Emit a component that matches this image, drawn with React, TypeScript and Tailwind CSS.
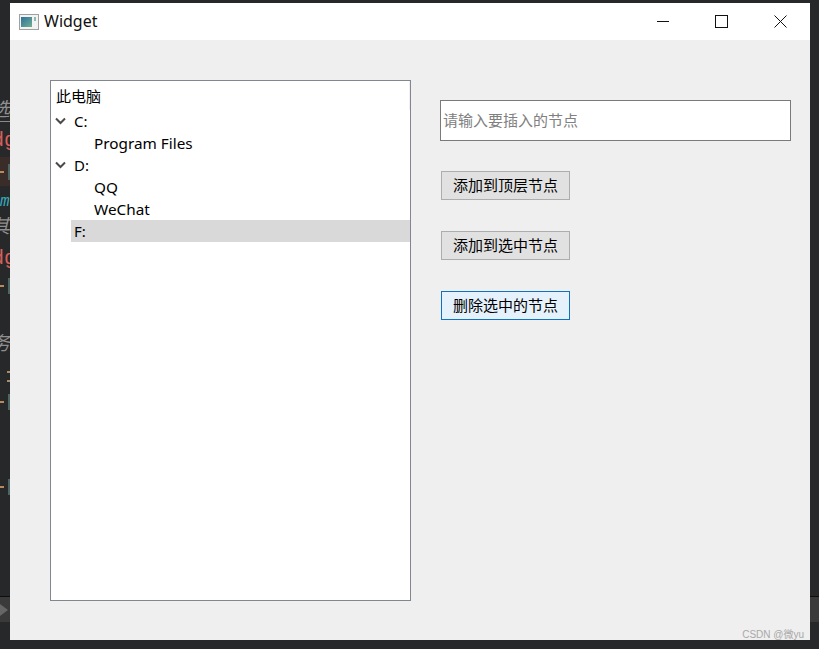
const ui = '"Noto Sans", "Noto Sans CJK SC", sans-serif';
const mono = '"Liberation Mono", monospace';

function Chevron() {
  return (
    <svg width="12" height="8" viewBox="0 0 12 8" className="shrink-0">
      <path d="M1 1.5 L5.5 6 L10 1.5" fill="none" stroke="#4a4a4a" strokeWidth="2" />
    </svg>
  );
}

function Branch({ label }: { label: string }) {
  return (
    <div className="flex h-[22px] items-center pl-[4px]">
      <div className="w-[19px]"><Chevron /></div>
      <span>{label}</span>
    </div>
  );
}

function Leaf({ label }: { label: string }) {
  return <div className="flex h-[22px] items-center pl-[43px] text-[15.3px]">{label}</div>;
}

function Btn({ children, active }: { children: string; active?: boolean }) {
  return (
    <button
      className={
        active
          ? 'ml-px flex h-[29px] w-[129px] items-center justify-center border border-[#0f72c0] bg-[#e5f1fb] pb-px text-[15px] text-black'
          : 'ml-px flex h-[29px] w-[129px] items-center justify-center border border-[#adadad] bg-[#e1e1e1] pb-px text-[15px] text-black'
      }
    >
      {children}
    </button>
  );
}

function Glyph({ h, children, cls }: { h: string; children: string; cls: string }) {
  return <div className={`flex ${h} shrink-0 items-center justify-end overflow-hidden whitespace-nowrap ${cls}`}>{children}</div>;
}

function Marks() {
  return (
    <div className="flex h-[16px] shrink-0 items-center justify-between">
      <div className="h-[2px] w-[4px] bg-[#b98a5c]" />
      <div className="h-full w-[2px] bg-[#4d6663]" />
    </div>
  );
}

function LeftStrip() {
  return (
    <div className="flex w-[10px] shrink-0 flex-col overflow-hidden">
      <div className="h-[98px] shrink-0" />
      <Glyph h="h-[24px]" cls="border-b border-[#8a8a8a] text-[19px] italic text-[#8f8f8f]">选</Glyph>
      <div className="h-[6px] shrink-0" />
      <div className="flex h-[26px] shrink-0 items-center justify-start overflow-hidden whitespace-nowrap text-[20px] text-[#d95f5b]" style={{ fontFamily: mono }}><span className="ml-[-8px]">dg</span></div>
      <div className="h-[3px] shrink-0" />
      <div className="flex h-[29px] shrink-0 items-center bg-[#3a2c28]"><div className="w-full"><Marks /></div></div>
      <div className="h-[6px] shrink-0" />
      <div className="flex h-[20px] shrink-0 items-center overflow-hidden text-[16px] italic text-[#36a9bb]" style={{ fontFamily: mono }}>m</div>
      <div className="h-[2px] shrink-0" />
      <Glyph h="h-[24px]" cls="text-[19px] italic text-[#8f8f8f]">其</Glyph>
      <div className="h-[8px] shrink-0" />
      <div className="flex h-[26px] shrink-0 items-center justify-start overflow-hidden whitespace-nowrap text-[20px] text-[#d95f5b]" style={{ fontFamily: mono }}><span className="ml-[-8px]">dg</span></div>
      <div className="h-[6px] shrink-0" />
      <Marks />
      <div className="h-[37px] shrink-0" />
      <Glyph h="h-[24px]" cls="text-[19px] italic text-[#8f8f8f]">务</Glyph>
      <div className="h-[16px] shrink-0" />
      <div className="flex h-[11px] shrink-0 flex-col items-end justify-between">
        <div className="h-[2px] w-[3px] bg-[#a98c68]" />
        <div className="h-[2px] w-[3px] bg-[#a98c68]" />
      </div>
      <div className="h-[12px] shrink-0" />
      <Marks />
      <div className="h-[69px] shrink-0" />
      <Marks />
      <div className="h-[101px] shrink-0" />
      <div className="flex h-[26px] shrink-0 items-center border-t border-[#0e0e0e] bg-[#3a3a3a]">
        <svg width="10" height="16"><path d="M0 2 L8 8 L0 14Z" fill="#666" /></svg>
      </div>
    </div>
  );
}

function RightStrip() {
  return (
    <div className="flex w-[9px] shrink-0 flex-col">
      <div className="h-[596px] shrink-0" />
      <div className="h-[26px] shrink-0 border-t border-[#0e0e0e] bg-[#3a3a3a]" />
    </div>
  );
}

export default function App() {
  return (
    <div className="relative flex h-[649px] w-[819px] overflow-hidden bg-[#27282a]" style={{ fontFamily: ui }}>
      <LeftStrip />
      <div className="mt-[3px] flex h-[637px] w-[800px] shrink-0 flex-col">
        <div className="flex h-[37px] shrink-0 items-center bg-white pl-[9px] pr-[23px]">
          <svg width="20" height="16" viewBox="0 0 20 16" className="shrink-0">
            <defs>
              <linearGradient id="g" x1="0" y1="0" x2="1" y2="1">
                <stop offset="0" stopColor="#2f6f9f" />
                <stop offset="1" stopColor="#6fb08f" />
              </linearGradient>
            </defs>
            <rect x="0.5" y="0.5" width="19" height="15" fill="#f3f3f3" stroke="#a0a0a0" />
            <rect x="2" y="3" width="11" height="10" fill="url(#g)" />
            <rect x="15" y="3" width="2" height="4" fill="#8fbab2" />
          </svg>
          <span className="ml-[5px] pb-[2px] text-[16px] leading-none text-[#111]">Widget</span>
          <div className="ml-auto flex items-center gap-[46px]">
            <svg width="13" height="13" viewBox="0 0 13 13"><path d="M1 6.5H13" stroke="#111" /></svg>
            <svg width="13" height="13" viewBox="0 0 13 13"><rect x="0.5" y="0.5" width="12" height="12" fill="none" stroke="#111" /></svg>
            <svg width="13" height="13" viewBox="0 0 13 13"><path d="M0.5 0.5L12.5 12.5M12.5 0.5L0.5 12.5" stroke="#111" /></svg>
          </div>
        </div>
        <div className="flex flex-1 bg-[#efefef] pl-[40px] pt-[40px]">
          <div className="h-[521px] w-[361px] shrink-0 border border-[#82878f] bg-white text-[15px] text-black">
            <div className="flex h-[29px] items-center border-r border-[#f0f0f0] pl-[5px] pt-[2px] leading-none">此电脑</div>
            <Branch label="C:" />
            <Leaf label="Program Files" />
            <Branch label="D:" />
            <Leaf label="QQ" />
            <Leaf label="WeChat" />
            <div className="pl-[20px]">
              <div className="flex h-[22px] items-center bg-[#d9d9d9] pl-[3px]">F:</div>
            </div>
          </div>
          <div className="ml-[29px] flex w-[351px] flex-col items-start pt-[20px]">
            <input
              readOnly
              placeholder="请输入要插入的节点"
              className="mb-[30px] h-[41px] w-[351px] border border-[#7a7a7a] bg-white pb-[2px] pl-[2px] text-[15px] outline-none placeholder:text-[#808080]"
            />
            <div className="flex flex-col gap-[31px]">
              <Btn>添加到顶层节点</Btn>
              <Btn>添加到选中节点</Btn>
              <Btn active>删除选中的节点</Btn>
            </div>
          </div>
        </div>
      </div>
      <RightStrip />
      <span className="absolute right-[15px] top-[628px] text-[10px] leading-[13px] text-[#a8a8a8]" style={{ fontFamily: '"Liberation Sans", "Noto Sans CJK SC", sans-serif' }}>CSDN @微yu</span>
    </div>
  );
}
